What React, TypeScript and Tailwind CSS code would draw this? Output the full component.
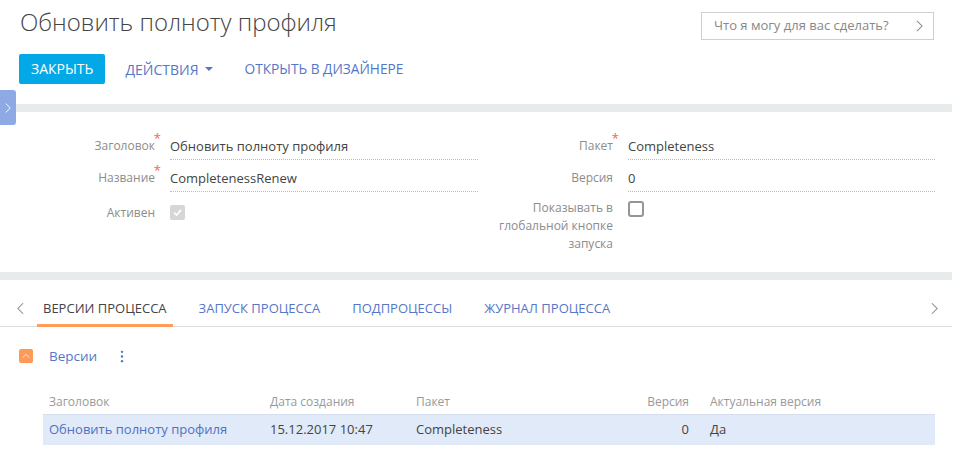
import React from "react";

const Chevron = ({ dir, className }: { dir: "left" | "right" | "up"; className?: string }) => {
  const d = dir === "left" ? "M7 1 L1 7 L7 13" : dir === "right" ? "M1 1 L7 7 L1 13" : "M1 7 L6 2 L11 7";
  const vb = dir === "up" ? "0 0 12 9" : "0 0 8 14";
  return (
    <svg viewBox={vb} className={className} fill="none" stroke="currentColor" strokeWidth="1.2">
      <path d={d} />
    </svg>
  );
};

const Field = ({ label, value, required, lw, vw }: { label: string; value: string; required?: boolean; lw: string; vw: string }) => (
  <div className="flex h-[32px]">
    <div className={`relative ${lw} pr-[15px] text-right text-[12px] text-[#8c8c8c] leading-[32px] pt-[2px]`}>
      {label}
      {required && <span className="absolute right-[9px] top-[4px] text-[#f06a4e] text-[13px] leading-[13px]">*</span>}
    </div>
    <div className={`${vw} border-b border-dotted border-[#bdbdbd] text-[13px] text-[#444] leading-[32px] pt-[2px]`}>{value}</div>
  </div>
);

export default function App() {
  return (
    <div className="relative w-[954px] h-[464px] overflow-hidden bg-white" style={{ fontFamily: '"Open Sans", "Noto Sans", sans-serif' }}>
      <div className="w-[952px]">
        {/* Header */}
        <div className="flex justify-between items-start h-[54px] pl-[20px] pr-[18px]">
          <h1 className="text-[24px] font-light text-[#444] leading-[32px] pt-[6px]">Обновить полноту профиля</h1>
          <div className="mt-[12px] w-[233px] h-[28px] border border-[#cfcfcf] flex items-center justify-between pl-[12px] pr-[10px]">
            <span className="text-[13px] text-[#888]">Что я могу для вас сделать?</span>
            <Chevron dir="right" className="w-[7px] h-[12px] text-[#888]" />
          </div>
        </div>
        {/* Actions */}
        <div className="flex items-center h-[30px] pl-[19px]">
          <button className="h-[30px] px-[12px] bg-[#03a8e7] text-white text-[14px] rounded-[2px] leading-[30px]">ЗАКРЫТЬ</button>
          <span className="ml-[20px] flex items-center gap-[6px] text-[14px] text-[#5677c6]">
            ДЕЙСТВИЯ
            <svg viewBox="0 0 8 4" className="w-[8px] h-[4px]"><path d="M0 0 L8 0 L4 4 Z" fill="#5677c6" /></svg>
          </span>
          <span className="ml-[32px] text-[13.7px] text-[#5677c6]">ОТКРЫТЬ В ДИЗАЙНЕРЕ</span>
        </div>
        <div className="h-[20px]" />
        <div className="h-[8px] bg-[#e8ebeb] ml-[16px]" />
        {/* Form */}
        <div className="h-[160px] pt-[16px] flex">
          <div className="flex flex-col">
            <Field lw="w-[170px]" vw="w-[308px]" label="Заголовок" value="Обновить полноту профиля" required />
            <Field lw="w-[170px]" vw="w-[308px]" label="Название" value="CompletenessRenew" required />
            <div className="flex mt-[12px]">
              <div className="w-[170px] pr-[15px] text-right text-[12px] text-[#8c8c8c] leading-[18px]">Активен</div>
              <div className="w-[15px] h-[15px] bg-[#d6d6d6] rounded-[2px] flex items-center justify-center mt-[1px]">
                <svg viewBox="0 0 10 8" className="w-[9px] h-[7px]"><path d="M1 4 L4 7 L9 1" fill="none" stroke="white" strokeWidth="1.8" /></svg>
              </div>
            </div>
          </div>
          <div className="flex flex-col">
            <Field lw="w-[150px]" vw="w-[307px]" label="Пакет" value="Completeness" required />
            <Field lw="w-[150px]" vw="w-[307px]" label="Версия" value="0" />
            <div className="flex mt-[7px]">
              <div className="w-[150px] pr-[15px] text-right text-[12px] text-[#8c8c8c] leading-[18px]">Показывать в глобальной кнопке запуска</div>
              <div className="w-[16px] h-[16px] border-2 border-[#959595] rounded-[3px] mt-[2px]" />
            </div>
          </div>
        </div>
        <div className="h-[8px] bg-[#e8ebeb]" />
        {/* Tabs */}
        <div className="relative h-[47px] border-b border-[#dcdcdc] flex items-center">
          <Chevron dir="left" className="absolute left-[17px] top-[22px] w-[7px] h-[13px] text-[#888]" />
          <div className="flex h-full ml-[37px]">
            <div className="relative h-full px-[6px] flex items-center pt-[11px] text-[13px] text-[#444]">
              ВЕРСИИ ПРОЦЕССА
              <div className="absolute left-0 right-0 bottom-[-1px] h-[3px] bg-[#ff9c5a]" />
            </div>
            <div className="h-full ml-[20px] px-[6px] flex items-center pt-[11px] text-[13px] text-[#5677c6]">ЗАПУСК ПРОЦЕССА</div>
            <div className="h-full ml-[20px] px-[6px] flex items-center pt-[11px] text-[13px] text-[#5677c6]">ПОДПРОЦЕССЫ</div>
            <div className="h-full ml-[20px] px-[6px] flex items-center pt-[11px] text-[13px] text-[#5677c6]">ЖУРНАЛ ПРОЦЕССА</div>
          </div>
          <Chevron dir="right" className="absolute right-[14px] top-[22px] w-[7px] h-[13px] text-[#888]" />
        </div>
        {/* Versions detail */}
        <div className="flex items-center h-[16px] mt-[21px] pl-[19px]">
          <div className="w-[14px] h-[14px] bg-[#fd9a57] rounded-[2px] flex items-center justify-center">
            <Chevron dir="up" className="w-[8px] h-[6px] text-white" />
          </div>
          <span className="ml-[16px] text-[13.5px] text-[#5677c6]">Версии</span>
          <svg viewBox="0 0 4 14" className="ml-[23px] w-[4px] h-[13px]">
            <circle cx="2" cy="2" r="1.3" fill="#5677c6" />
            <circle cx="2" cy="7" r="1.3" fill="#5677c6" />
            <circle cx="2" cy="12" r="1.3" fill="#5677c6" />
          </svg>
        </div>
        <div className="ml-[43px] w-[892px] mt-[26px]">
          <div className="flex h-[24px] items-center text-[12px] text-[#999]">
            <div className="w-[227px] pl-[6px]">Заголовок</div>
            <div className="w-[146px]">Дата создания</div>
            <div className="w-[199px]">Пакет</div>
            <div className="w-[74px] text-right">Версия</div>
            <div className="pl-[21px]">Актуальная версия</div>
          </div>
          <div className="flex h-[31px] items-center text-[13px] text-[#444] bg-[#e1eaf8] border-t border-[#d6dfee]">
            <div className="w-[227px] pl-[6px] text-[#5071c2]">Обновить полноту профиля</div>
            <div className="w-[146px]">15.12.2017 10:47</div>
            <div className="w-[199px]">Completeness</div>
            <div className="w-[74px] text-right">0</div>
            <div className="pl-[21px]">Да</div>
          </div>
        </div>
      </div>
      {/* side toggle */}
      <div className="absolute left-0 top-[90px] w-[16px] h-[35px] rounded-r-[3px] bg-[#8eaae4] flex items-center justify-center">
        <Chevron dir="right" className="w-[6px] h-[12px] text-white" />
      </div>
    </div>
  );
}
